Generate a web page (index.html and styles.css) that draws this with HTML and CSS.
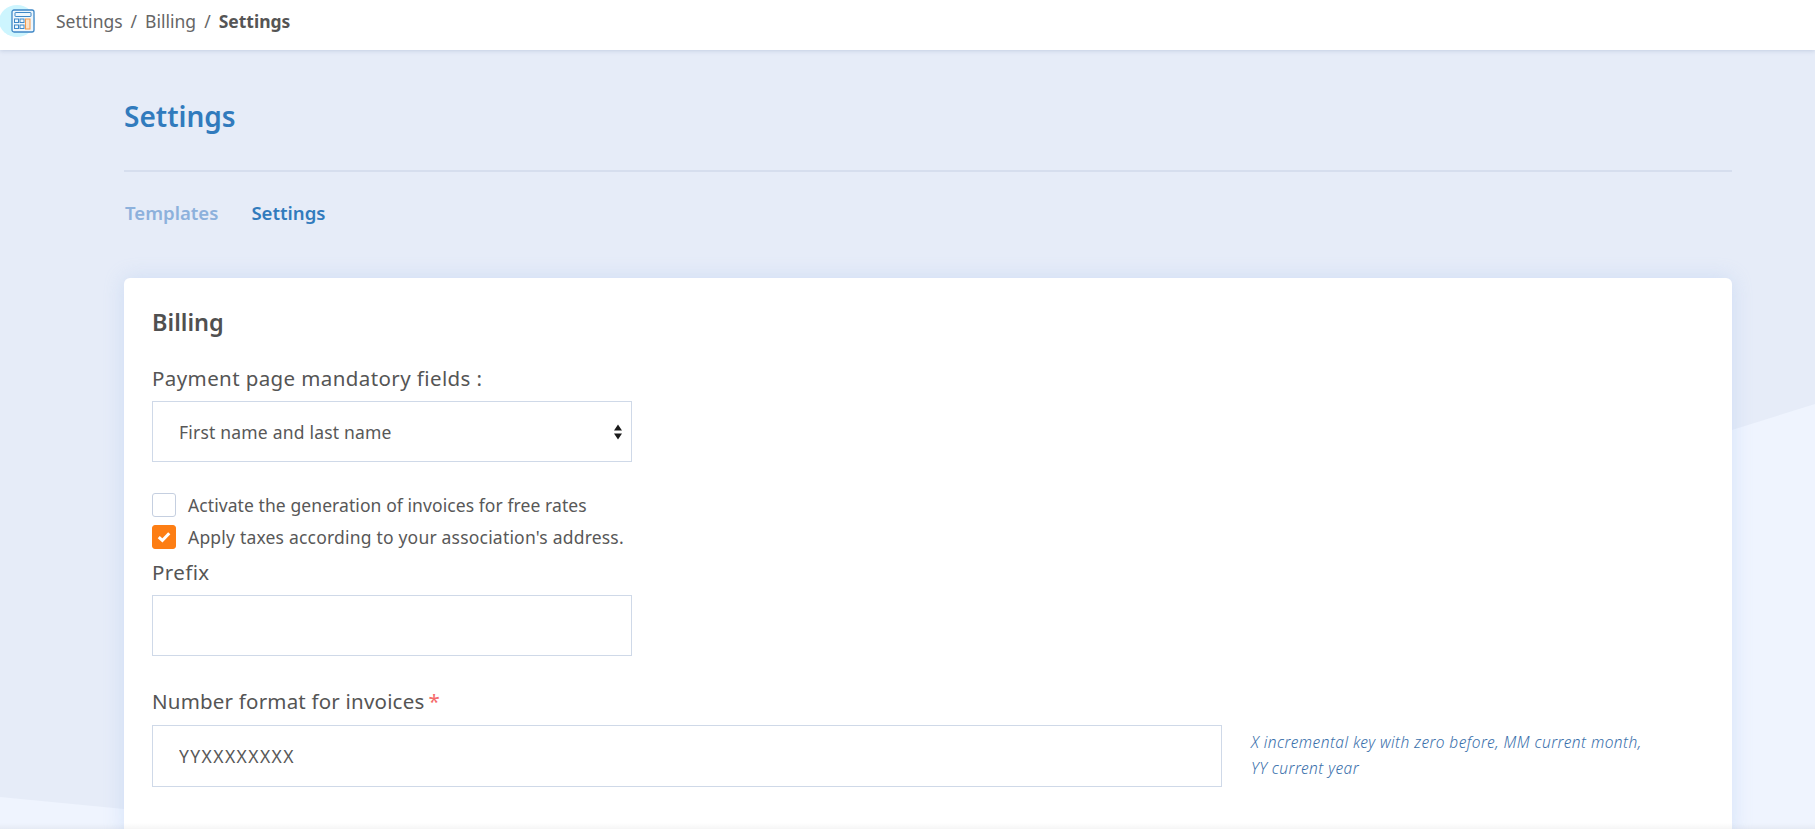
FILE: index.html
```html
<!DOCTYPE html>
<html lang="en">
<head>
<meta charset="utf-8">
<title>Settings</title>
<link rel="stylesheet" href="styles.css">
</head>
<body>
<svg class="backdrop" viewBox="0 0 1815 829" preserveAspectRatio="none" aria-hidden="true"><polygon points="0,797 124,809 1732,430 1815,404 1815,829 0,829" fill="#eff4fe"/></svg>
<header class="topbar">
  <div class="logo">
    <svg width="24" height="24" viewBox="0 0 24 24" fill="none" aria-hidden="true">
      <rect x="1" y="1" width="22" height="22" rx="2" fill="#eef7fd" stroke="#3f87c6" stroke-width="1.3"/>
      <rect x="4" y="3.5" width="16" height="4" rx=".5" stroke="#3f87c6"/>
      <rect x="3.5" y="10" width="4" height="3.5" stroke="#3f87c6"/>
      <rect x="9" y="10" width="4" height="3.5" stroke="#3f87c6"/>
      <rect x="3.5" y="16" width="4" height="3.5" stroke="#3f87c6"/>
      <rect x="9" y="16" width="4" height="3.5" stroke="#3f87c6"/>
      <rect x="14.5" y="10" width="4.5" height="10" fill="#fde3c8" stroke="#f6994a"/>
    </svg>
  </div>
  <nav class="crumbs">
    <span>Settings</span><span class="sep">/</span><span>Billing</span><span class="sep">/</span><strong>Settings</strong>
  </nav>
</header>
<main class="page">
  <h1 class="title">Settings</h1>
  <nav class="tabs">
    <a class="tab">Templates</a>
    <a class="tab tab-active">Settings</a>
  </nav>
  <section class="card">
    <h2 class="card-title">Billing</h2>
    <label class="label label-first">Payment page mandatory fields :</label>
    <div class="control select">
      <span>First name and last name</span>
      <svg width="8" height="16" viewBox="0 0 8 16" aria-hidden="true"><path d="M4 0.5 8 6.5H0ZM0 9.5H8L4 15.5Z" fill="#1a1a1a"/></svg>
    </div>
    <div class="checks">
      <div class="check-row check-row-tight"><span class="box"></span><span>Activate the generation of invoices for free rates</span></div>
      <div class="check-row"><span class="box box-on"><svg width="14" height="12" viewBox="0 0 12 10" fill="none" aria-hidden="true"><path d="M1.5 5.2 4.6 8 10.5 1.8" stroke="#fff" stroke-width="2.6"/></svg></span><span>Apply taxes according to your association's address.</span></div>
    </div>
    <label class="label label-prefix">Prefix</label>
    <input class="control input-short" type="text" value="">
    <label class="label label-number">Number format for invoices<span class="req">*</span></label>
    <div class="number-row">
      <input class="control input-wide" type="text" value="YYXXXXXXXX">
      <p class="hint">X incremental key with zero before, MM current month,<br>YY current year</p>
    </div>
  </section>
</main>
<div class="fade"></div>
</body>
</html>
```
FILE: styles.css
```css
* { box-sizing: border-box; }
html, body { height: 100%; }
body {
  margin: 0;
  height: 829px;
  overflow: hidden;
  position: relative;
  background: #e6ecf8;
  font-family: "Noto Sans", "Lato", sans-serif;
  color: #585858;
}
.backdrop { position: absolute; inset: 0; width: 100%; height: 100%; }
.topbar {
  position: relative;
  height: 50px;
  background: #fff;
  box-shadow: 0 1px 4px rgba(120, 140, 180, .3);
  display: flex;
  align-items: center;
  overflow: hidden;
  padding-bottom: 1px;
}
.logo {
  width: 36px;
  height: 32px;
  margin: 0 21px 8px -1px;
  padding-left: 12px;
  display: flex;
  align-items: center;
  background: #cdf5fe;
  border-radius: 50%;
  flex: none;
}
.crumbs { display: flex; gap: 8px; font-size: 17.5px; color: #666; margin-top: -8px; }
.crumbs strong { color: #555; font-weight: 700; }
.page { position: relative; padding: 0 83px 0 124px; }
.title {
  margin: 0;
  height: 122px;
  padding-top: 46px;
  border-bottom: 2px solid #d6deee;
  font-size: 28px;
  line-height: 40px;
  font-weight: 600;
  color: #317bbd;
}
.tabs {
  display: flex;
  gap: 33px;
  height: 106px;
  padding: 29px 1px 0;
  font-size: 18.6px;
  line-height: 24px;
  font-weight: 600;
}
.tab { color: #8db1dc; }
.tab-active { color: #317bbd; }
.card {
  height: 560px;
  padding: 29px 28px 0;
  background: #fff;
  border-radius: 6px;
  box-shadow: 0 0 20px rgba(150, 185, 240, .3);
}
.card-title { margin: 0; font-size: 23.5px; line-height: 30px; font-weight: 600; color: #505050; }
.label { display: block; font-size: 20.5px; line-height: 26px; color: #555; letter-spacing: .4px; }
.label-first { margin-top: 28px; }
.label-prefix { margin-top: 10px; }
.label-number { margin-top: 32px; letter-spacing: .2px; }
.req { color: #f56c6c; margin-left: 4px; }
.control {
  display: block;
  width: 480px;
  height: 61px;
  margin-top: 9px;
  padding: 0 26px;
  border: 1px solid #cfd9e8;
  border-radius: 0;
  background: #fff;
  font: inherit;
  font-size: 17.5px;
  letter-spacing: .2px;
  color: #585858;
  outline: none;
}
.input-short { margin-top: 10px; }
.select { display: flex; align-items: center; justify-content: space-between; margin-top: 10px; padding-right: 9px; }
.checks { margin-top: 31px; display: flex; flex-direction: column; gap: 8px; }
.check-row { display: flex; align-items: center; gap: 12px; height: 24px; font-size: 17.5px; letter-spacing: .2px; color: #585858; }
.check-row-tight { letter-spacing: .08px; }
.box { width: 24px; height: 24px; border: 1px solid #c5cfe0; border-radius: 3px; background: #fff; display: flex; align-items: center; justify-content: center; }
.box-on { background: #fd7e14; border-color: #fd7e14; }
.number-row { display: flex; align-items: center; gap: 29px; margin-top: 11px; }
.input-wide { width: 1070px; height: 62px; margin-top: 0; letter-spacing: 1.4px; }
.hint { margin: 0 0 2px; font-size: 15.5px; line-height: 26px; font-style: italic; font-weight: 300; letter-spacing: .45px; color: #3a70ab; }
.fade { position: absolute; left: 0; right: 0; bottom: 0; height: 6px; background: linear-gradient(rgba(0,0,0,0), rgba(0,0,0,.04)); }
```
